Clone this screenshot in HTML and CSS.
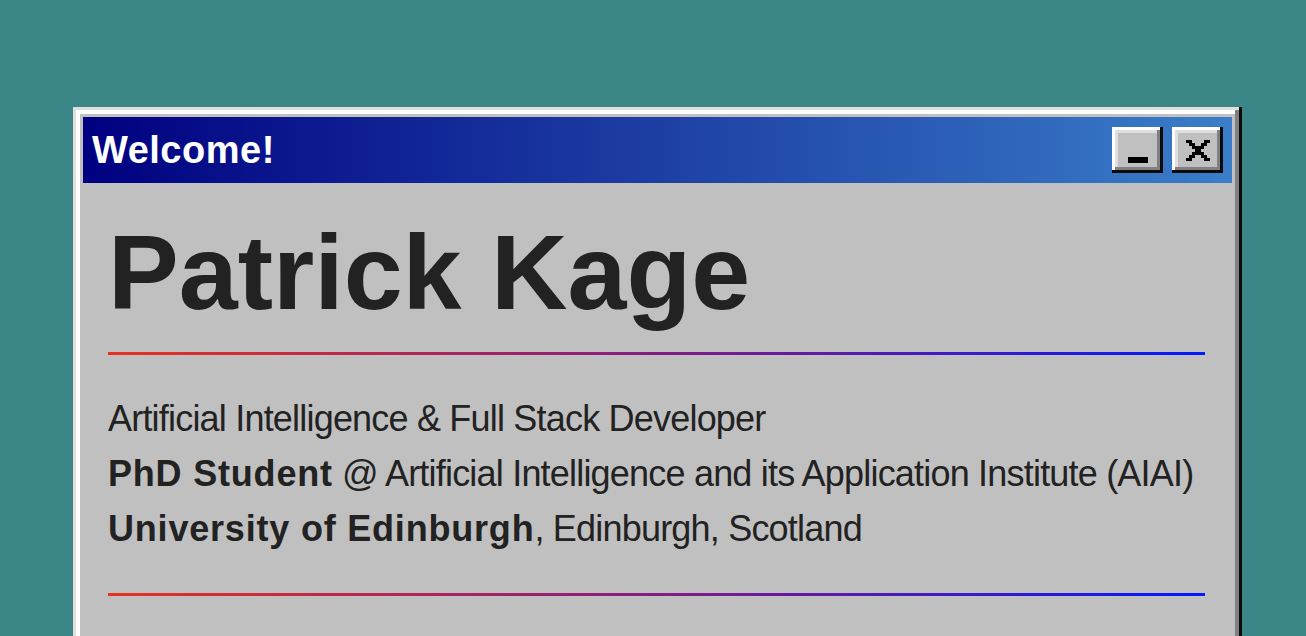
FILE: index.html
```html
<!DOCTYPE html>
<html lang="en">
<head>
  <meta charset="UTF-8">
  <meta name="viewport" content="width=device-width, initial-scale=1.0">
  <title>Patrick Kage</title>
  <link rel="stylesheet" href="styles.css">
</head>
<body>
  <div class="window">
    <div class="title-bar">
      <span class="title-text">Welcome!</span>
      <div class="title-controls">
        <button class="control minimize" aria-label="Minimize"><span class="min-bar"></span></button>
        <button class="control close" aria-label="Close">
          <svg width="24" height="21" viewBox="0 0 8 7" shape-rendering="crispEdges">
            <path d="M0 0h2v1H0zM6 0h2v1H6zM1 1h2v1H1zM5 1h2v1H5zM2 2h4v1H2zM3 3h2v1H3zM2 4h4v1H2zM1 5h2v1H1zM5 5h2v1H5zM0 6h2v1H0zM6 6h2v1H6z" fill="#000"/>
          </svg>
        </button>
      </div>
    </div>

    <div class="content">
      <h1>Patrick Kage</h1>
      <hr class="rainbow">
      <div class="about">
        <p>Artificial Intelligence &amp; Full Stack Developer</p>
        <p><b>PhD Student</b> @ Artificial Intelligence and its Application Institute (AIAI)</p>
        <p><b>University of Edinburgh</b>, Edinburgh, Scotland</p>
      </div>
      <hr class="rainbow">
    </div>
  </div>
</body>
</html>
```

FILE: styles.css
```css
body {
  margin: 0;
  padding: 107px 0 0 73px;
  background-color: #3a8686;
  font-family: "Liberation Sans", Arial, sans-serif;
  overflow: hidden;
}
.window {
  width: 1169px;
  height: 600px;
  box-sizing: border-box;
  padding: 10px;
  background-color: #c0c0c0;
  box-shadow: inset -3px -3px #0a0a0a, inset 3px 3px #dfdfdf, inset -7px -7px #808080, inset 7px 7px #fff;
}
.title-bar {
  height: 66px;
  display: flex;
  align-items: center;
  justify-content: space-between;
  padding: 0 9px 0 9px;
  background: linear-gradient(90deg, #000080, #3a7ec9);
}
.title-text {
  color: white;
  font-weight: bold;
  font-size: 38px;
  letter-spacing: 0.5px;
}
.title-controls {
  display: flex;
  gap: 9px;
}
.control {
  width: 51px;
  height: 46px;
  padding: 0;
  border: none;
  background-color: #c0c0c0;
  box-shadow: inset -3px -3px #0a0a0a, inset 3px 3px #fff, inset -6px -6px #808080, inset 6px 6px #dfdfdf;
  display: flex;
  justify-content: center;
  align-items: center;
}
.minimize {
  align-items: flex-end;
  padding-bottom: 10px;
  box-sizing: border-box;
}
.min-bar {
  display: block;
  width: 20px;
  height: 6px;
  background-color: #000;
}
.content {
  padding: 36px 27px 0 25px;
  color: #222;
}
h1 {
  margin: 0 0 27px 0;
  font-size: 106px;
  line-height: 1;
  font-weight: bold;
}
.rainbow {
  height: 3px;
  margin: 0;
  border: none;
  background: linear-gradient(90deg, #e8311f, #7a1a8e 55%, #0019ff);
}
.about {
  padding: 36px 0 37px 0;
  font-size: 36px;
  line-height: 55px;
  letter-spacing: -0.8px;
  white-space: nowrap;
}
.about p {
  margin: 0;
}
.about b {
  font-weight: bold;
  letter-spacing: 0.8px;
}
```
